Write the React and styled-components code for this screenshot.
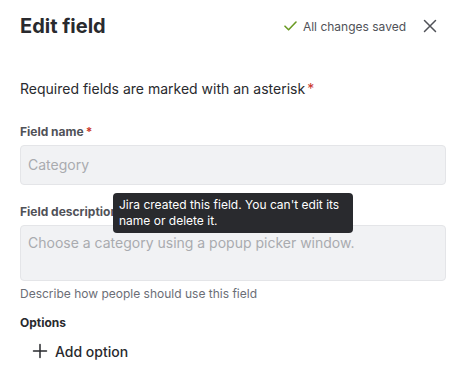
import React from "react";
import styled, { createGlobalStyle } from "styled-components";

const Global = createGlobalStyle`
  html, body { margin: 0; padding: 0; background: #ffffff; }
  body { font-family: Inter, "Noto Sans", sans-serif; color: #292a2e; -webkit-font-smoothing: antialiased; }
  * { box-sizing: border-box; }
`;

const Page = styled.div`
  position: relative;
  width: 474px;
  height: 390px;
  padding: 12px 28px 0 20px;
  overflow: hidden;
`;

const Header = styled.div`
  display: flex;
  align-items: center;
  height: 28px;
`;

const Title = styled.h1`
  margin: 0;
  flex: 1;
  font-size: 20px;
  line-height: 28px;
  font-weight: 700;
  color: #292a2e;
`;

const Saved = styled.div`
  display: flex;
  align-items: center;
  gap: 6px;
  font-size: 12px;
  color: #505258;
  margin-right: 12px;
`;

const CloseButton = styled.button`
  width: 24px;
  height: 24px;
  margin-right: 4px;
  padding: 0;
  border: 0;
  background: none;
  display: flex;
  align-items: center;
  justify-content: center;
  color: #505258;
`;

const Intro = styled.p`
  margin: 39px 0 0;
  font-size: 14px;
  line-height: 20px;
`;

const Asterisk = styled.span`
  color: #c9372c;
  margin-left: 2px;
`;

const Label = styled.div`
  margin-top: ${(p) => p.$top}px;
  font-size: 12px;
  line-height: 16px;
  font-weight: 700;
  color: ${(p) => (p.$dark ? "#292a2e" : "#505258")};
`;

const Field = styled.div`
  margin-top: 5px;
  height: ${(p) => p.$h}px;
  background: #f1f2f4;
  border: 1px solid #e4e5e8;
  border-radius: 4px;
  padding: ${(p) => (p.$multi ? "7px 7px" : "0 7px")};
  display: flex;
  align-items: ${(p) => (p.$multi ? "flex-start" : "center")};
  font-size: 14px;
  line-height: 20px;
  color: #a9abaf;
`;

const Helper = styled.div`
  margin-top: 5px;
  font-size: 12px;
  line-height: 16px;
  color: #6b6e76;
`;

const AddButton = styled.button`
  margin-top: 4px;
  height: 32px;
  padding: 0 8px;
  border: 0;
  background: none;
  display: flex;
  align-items: center;
  gap: 3px;
  font-family: inherit;
  font-size: 14px;
  font-weight: 500;
  color: #292a2e;
`;

const Tooltip = styled.div`
  position: absolute;
  left: 113px;
  top: 193px;
  width: 240px;
  padding: 4px 6px;
  background: #292a2e;
  color: #ffffff;
  border-radius: 4px;
  font-size: 12px;
  line-height: 16px;
`;

export default function App() {
  return (
    <>
      <Global />
      <Page>
        <Header>
          <Title>Edit field</Title>
          <Saved>
            <svg width="13" height="10" viewBox="0 0 13 10" fill="none">
              <path d="M1 5.2 L4.6 8.8 L12 1" stroke="#6a9a23" strokeWidth="1.6" strokeLinecap="round" strokeLinejoin="round" />
            </svg>
            All changes saved
          </Saved>
          <CloseButton aria-label="Close">
            <svg width="14" height="14" viewBox="0 0 14 14" fill="none">
              <path d="M1.5 1.5 L12.5 12.5 M12.5 1.5 L1.5 12.5" stroke="currentColor" strokeWidth="1.5" strokeLinecap="round" />
            </svg>
          </CloseButton>
        </Header>
        <Intro>
          Required fields are marked with an asterisk<Asterisk>*</Asterisk>
        </Intro>
        <Label $top={25}>
          Field name<Asterisk>*</Asterisk>
        </Label>
        <Field $h={40}>Category</Field>
        <Label $top={19}>Field description</Label>
        <Field $h={56} $multi>Choose a category using a popup picker window.</Field>
        <Helper>Describe how people should use this field</Helper>
        <Label $top={13} $dark>Options</Label>
        <AddButton>
          <svg width="24" height="24" viewBox="0 0 24 24" fill="none">
            <path d="M12 5.5 V18.5 M5.5 12 H18.5" stroke="#292a2e" strokeWidth="1.5" strokeLinecap="round" />
          </svg>
          Add option
        </AddButton>
        <Tooltip>Jira created this field. You can't edit its name or delete it.</Tooltip>
      </Page>
    </>
  );
}
